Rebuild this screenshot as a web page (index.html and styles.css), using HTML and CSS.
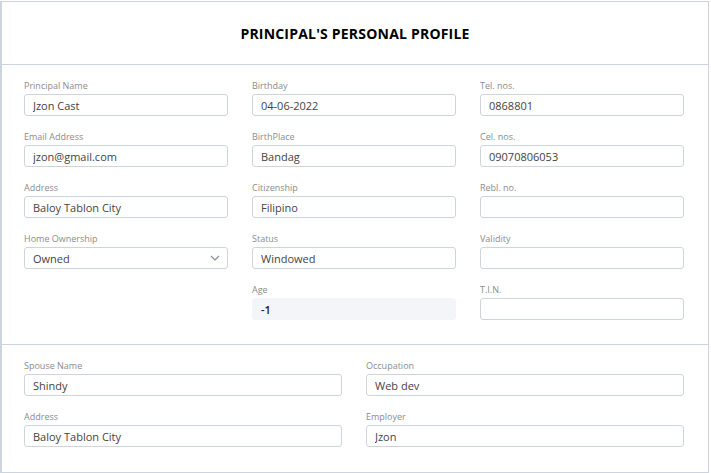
FILE: index.html
```html
<!DOCTYPE html>
<html>

<head>
  <title>Principal's Personal Profile</title>
  <link rel="stylesheet" href="styles.css">
</head>

<body>
  <section class="card">
    <div class="card-header">
      <h1>PRINCIPAL'S PERSONAL PROFILE</h1>
    </div>

    <div class="card-body three-cols">
      <div class="col">
        <div class="field">
          <label>Principal Name</label>
          <input type="text" value="Jzon Cast">
        </div>
        <div class="field">
          <label>Email Address</label>
          <input type="text" value="jzon@gmail.com">
        </div>
        <div class="field">
          <label>Address</label>
          <input type="text" value="Baloy Tablon City">
        </div>
        <div class="field">
          <label>Home Ownership</label>
          <div class="select">
            <span>Owned</span>
            <svg width="10" height="6" viewBox="0 0 10 6"><path d="M1 1l4 4 4-4" fill="none" stroke="#8a8f98" stroke-width="1.2"/></svg>
          </div>
        </div>
      </div>
      <div class="col">
        <div class="field">
          <label>Birthday</label>
          <input type="text" value="04-06-2022">
        </div>
        <div class="field">
          <label>BirthPlace</label>
          <input type="text" value="Bandag">
        </div>
        <div class="field">
          <label>Citizenship</label>
          <input type="text" value="Filipino">
        </div>
        <div class="field">
          <label>Status</label>
          <input type="text" value="Windowed">
        </div>
        <div class="field">
          <label>Age</label>
          <input type="text" class="readonly" value="-1" readonly>
        </div>
      </div>
      <div class="col">
        <div class="field">
          <label>Tel. nos.</label>
          <input type="text" value="0868801">
        </div>
        <div class="field">
          <label>Cel. nos.</label>
          <input type="text" value="09070806053">
        </div>
        <div class="field">
          <label>Rebl. no.</label>
          <input type="text" value="">
        </div>
        <div class="field">
          <label>Validity</label>
          <input type="text" value="">
        </div>
        <div class="field">
          <label>T.I.N.</label>
          <input type="text" value="">
        </div>
      </div>
    </div>

    <div class="card-body two-cols">
      <div class="col">
        <div class="field">
          <label>Spouse Name</label>
          <input type="text" value="Shindy">
        </div>
        <div class="field">
          <label>Address</label>
          <input type="text" value="Baloy Tablon City">
        </div>
      </div>
      <div class="col">
        <div class="field">
          <label>Occupation</label>
          <input type="text" value="Web dev">
        </div>
        <div class="field">
          <label>Employer</label>
          <input type="text" value="Jzon">
        </div>
      </div>
    </div>
  </section>
</body>

</html>
```

FILE: styles.css
```css
* {
  margin: 0;
  padding: 0;
  box-sizing: border-box;
  font-family: "Open Sans", "Noto Sans", sans-serif;
}

:root {
  --border-color: #cdd4dd;
  --input-border: #cfd4da;
  --label-color: #8c8c8c;
  --text-color: #444444;
}

body {
  background-color: #ffffff;
  padding-top: 1px;
}

.card {
  width: 709px;
  border: 1px solid var(--border-color);
  border-left-width: 2px;
  background-color: #ffffff;
}

.card-header {
  height: 63px;
  display: flex;
  justify-content: center;
  align-items: center;
  border-bottom: 1px solid var(--border-color);
}

.card-header h1 {
  font-size: 14px;
  font-weight: 700;
  color: #000000;
  letter-spacing: 0.2px;
}

.card-body {
  display: grid;
  column-gap: 24px;
  padding: 15px 24px 24px 22px;
}

.three-cols {
  grid-template-columns: repeat(3, 1fr);
  border-bottom: 1px solid var(--border-color);
}

.two-cols {
  grid-template-columns: repeat(2, 1fr);
  padding-top: 15px;
  padding-bottom: 25px;
}

.col {
  display: flex;
  flex-direction: column;
  gap: 15px;
}

.field {
  display: flex;
  flex-direction: column;
}

.field label {
  font-size: 9px;
  line-height: 11px;
  color: var(--label-color);
  margin-bottom: 3px;
}

.field input,
.select {
  height: 22px;
  width: 100%;
  padding: 0 8px;
  border: 1px solid var(--input-border);
  border-radius: 3px;
  font-size: 11px;
  color: var(--text-color);
  background-color: #ffffff;
  outline: none;
}

.select {
  display: flex;
  align-items: center;
  justify-content: space-between;
  padding-right: 7px;
}

.field input.readonly {
  border-color: #f4f5f8;
  background-color: #f4f5f8;
  font-weight: 600;
  color: #222222;
}
```
